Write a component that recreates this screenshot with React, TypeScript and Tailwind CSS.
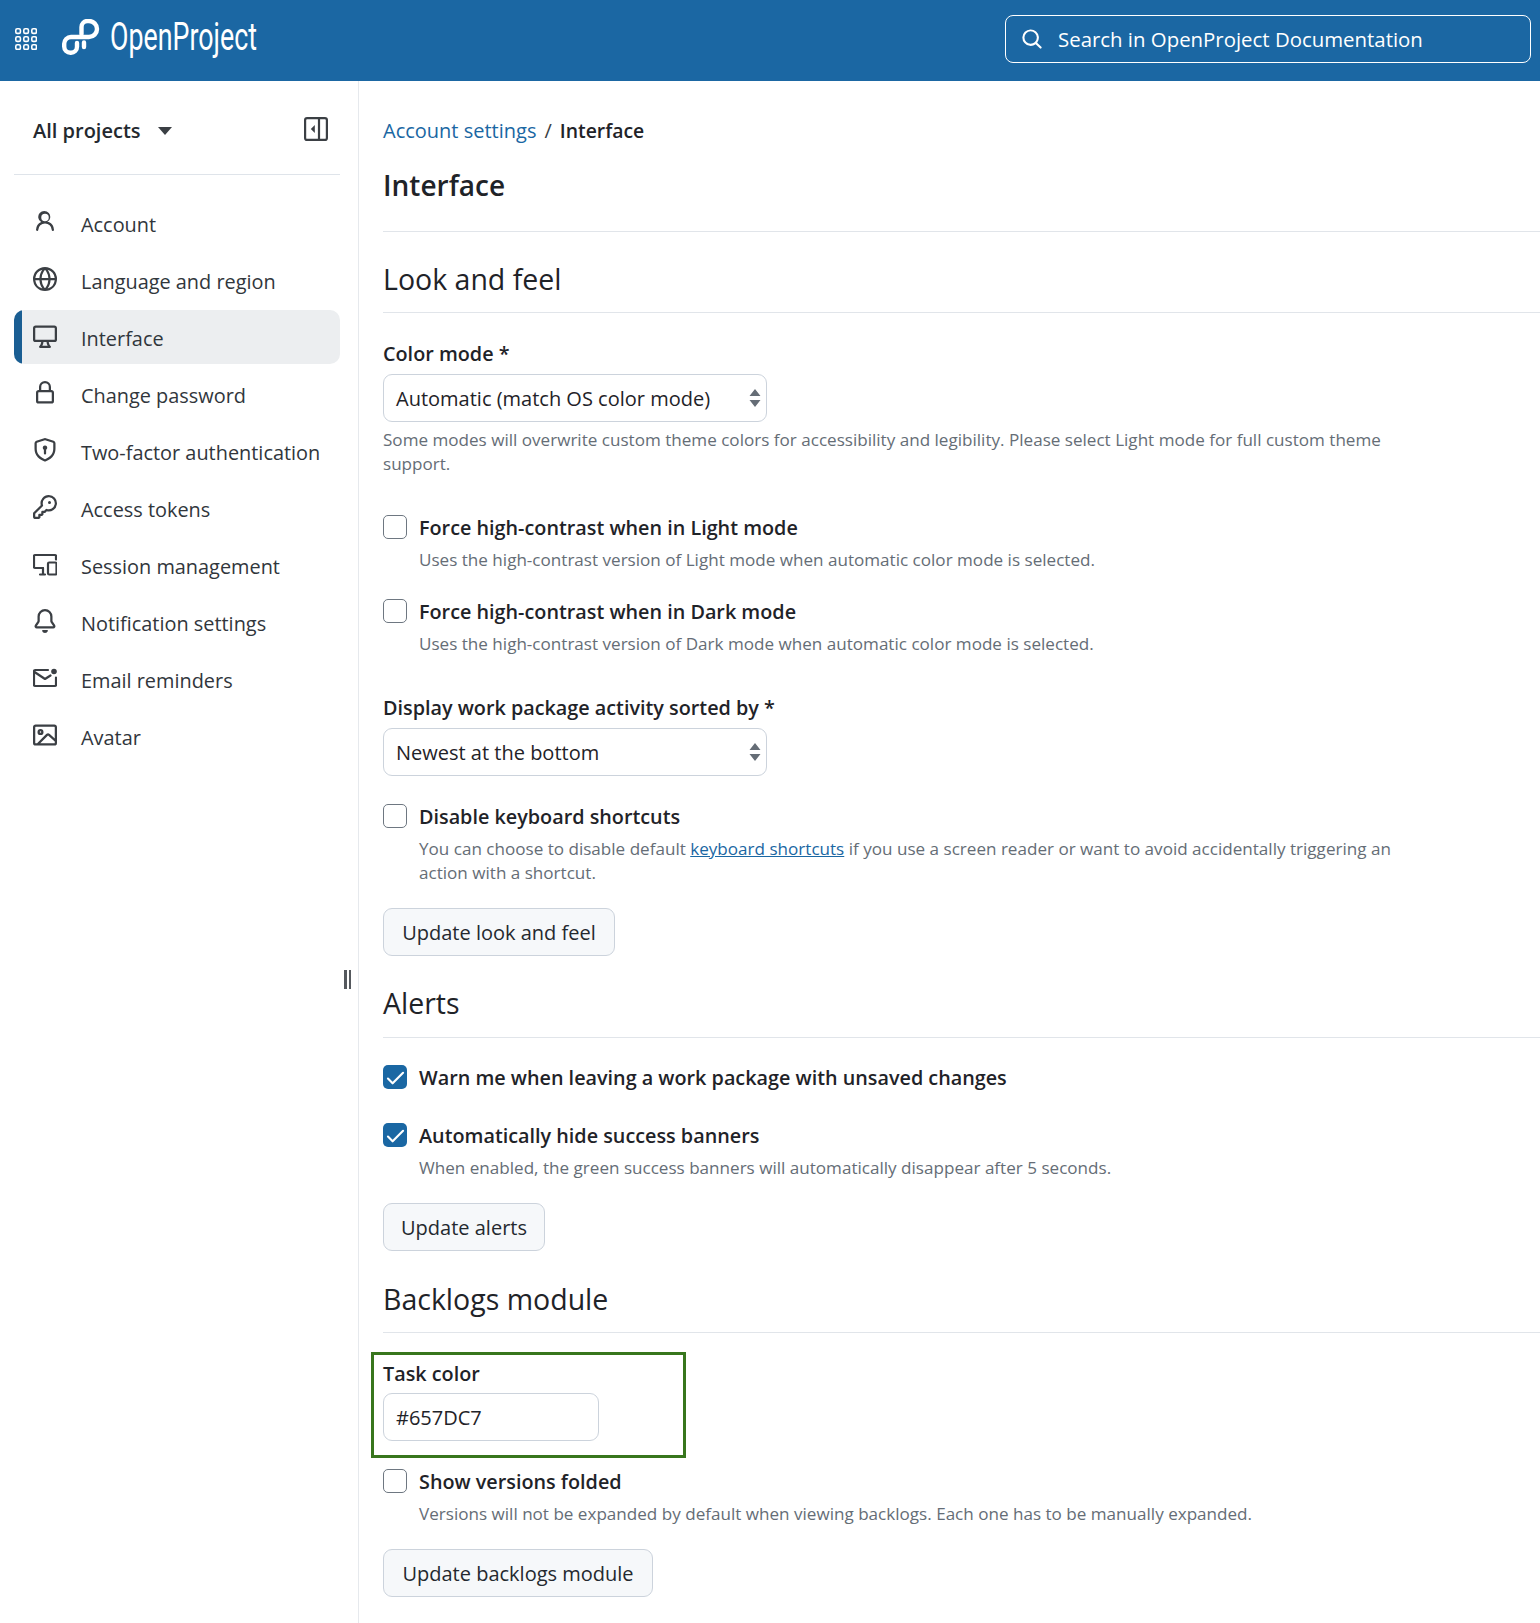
import type { ReactNode } from "react";

const fontStack = "font-['Open_Sans','Noto_Sans',sans-serif]";

// octicons, 16px grid
const paths = {
  person: "M10.561 8.073a6.005 6.005 0 0 1 3.432 5.142.75.75 0 1 1-1.498.07 4.5 4.5 0 0 0-8.99 0 .75.75 0 0 1-1.498-.07 6.004 6.004 0 0 1 3.431-5.142 3.999 3.999 0 1 1 4.123 0ZM10.5 5a2.5 2.5 0 1 0-5 0 2.5 2.5 0 0 0 5 0Z",
  globe: "M8 0a8 8 0 1 1 0 16A8 8 0 0 1 8 0ZM5.78 8.75a9.64 9.64 0 0 0 1.363 4.177c.255.426.542.832.857 1.215.245-.296.551-.705.857-1.215A9.64 9.64 0 0 0 10.22 8.75Zm4.44-1.5a9.64 9.64 0 0 0-1.363-4.177c-.307-.51-.612-.919-.857-1.215a9.927 9.927 0 0 0-.857 1.215A9.64 9.64 0 0 0 5.78 7.25Zm-5.944 1.5H1.543a6.507 6.507 0 0 0 4.666 5.5c-.123-.181-.24-.365-.352-.552-.715-1.192-1.437-2.874-1.581-4.948Zm-2.733-1.5h2.733c.144-2.074.866-3.756 1.58-4.948.12-.197.237-.381.353-.552a6.507 6.507 0 0 0-4.666 5.5Zm10.181 1.5c-.144 2.074-.866 3.756-1.58 4.948-.12.197-.237.381-.353.552a6.507 6.507 0 0 0 4.666-5.5Zm2.733-1.5a6.507 6.507 0 0 0-4.666-5.5c.123.181.24.365.353.552.714 1.192 1.436 2.874 1.58 4.948Z",
  desktop: "M14.25 1c.966 0 1.75.784 1.75 1.75v7.5A1.75 1.75 0 0 1 14.25 12h-3.727c.099 1.041.52 1.872 1.292 2.757A.752.752 0 0 1 11.25 16h-6.5a.75.75 0 0 1-.565-1.243c.772-.885 1.192-1.716 1.292-2.757H1.75A1.75 1.75 0 0 1 0 10.25v-7.5C0 1.784.784 1 1.75 1ZM1.75 2.5a.25.25 0 0 0-.25.25v7.5c0 .138.112.25.25.25h12.5a.25.25 0 0 0 .25-.25v-7.5a.25.25 0 0 0-.25-.25ZM9.018 12H6.982a5.72 5.72 0 0 1-.765 2.5h3.566a5.72 5.72 0 0 1-.765-2.5Z",
  lock: "M4 4a4 4 0 0 1 8 0v2h.25c.966 0 1.75.784 1.75 1.75v5.5A1.75 1.75 0 0 1 12.25 15h-8.5A1.75 1.75 0 0 1 2 13.25v-5.5C2 6.784 2.784 6 3.75 6H4Zm8.25 3.5h-8.5a.25.25 0 0 0-.25.25v5.5c0 .138.112.25.25.25h8.5a.25.25 0 0 0 .25-.25v-5.5a.25.25 0 0 0-.25-.25ZM10.5 6V4a2.5 2.5 0 1 0-5 0v2Z",
  shield: "m8.533.133 5.25 1.68A1.75 1.75 0 0 1 15 3.48V7c0 1.566-.32 3.182-1.303 4.682-.983 1.498-2.585 2.813-5.032 3.855a1.697 1.697 0 0 1-1.33 0c-2.447-1.042-4.049-2.357-5.032-3.855C1.32 10.182 1 8.566 1 7V3.48a1.75 1.75 0 0 1 1.217-1.667l5.25-1.68a1.748 1.748 0 0 1 1.066 0Zm-.61 1.429.001.001-5.25 1.68a.251.251 0 0 0-.174.237V7c0 1.36.275 2.666 1.057 3.859.784 1.194 2.121 2.342 4.366 3.298a.196.196 0 0 0 .154 0c2.245-.957 3.582-2.103 4.366-3.297C13.225 9.666 13.5 8.358 13.5 7V3.48a.25.25 0 0 0-.174-.238l-5.25-1.68a.25.25 0 0 0-.153 0ZM9.5 6.5c0 .536-.286 1.032-.75 1.3v2.45a.75.75 0 0 1-1.5 0V7.8A1.5 1.5 0 1 1 9.5 6.5Z",
  key: "M10.5 0a5.499 5.499 0 1 1-1.288 10.848l-.932.932a.749.749 0 0 1-.53.22H7v.75a.749.749 0 0 1-.22.53l-.5.5a.749.749 0 0 1-.53.22H5v.75a.749.749 0 0 1-.22.53l-.5.5a.749.749 0 0 1-.53.22h-2A1.75 1.75 0 0 1 0 14.25v-2c0-.199.079-.389.22-.53l4.932-4.932A5.5 5.5 0 0 1 10.5 0Zm-4 5.5c-.001.431.069.86.205 1.269a.75.75 0 0 1-.181.768L1.5 12.56v1.69c0 .138.112.25.25.25h1.69l.06-.06v-1.19a.75.75 0 0 1 .75-.75h1.19l.06-.06v-1.19a.75.75 0 0 1 .75-.75h1.19l1.023-1.025a.75.75 0 0 1 .768-.18A4 4 0 1 0 6.5 5.5ZM11 6a1 1 0 1 1 0-2 1 1 0 0 1 0 2Z",
  bell: "M8 16c.9 0 1.7-.6 1.9-1.5.1-.3-.1-.5-.4-.5h-3c-.3 0-.5.2-.4.5.2.9 1 1.5 1.9 1.5ZM3 5a5 5 0 0 1 10 0v2.947c0 .05.015.098.042.139l1.703 2.555A1.519 1.519 0 0 1 13.482 13H2.518a1.516 1.516 0 0 1-1.263-2.36l1.703-2.554A.255.255 0 0 0 3 7.947Zm5-3.5A3.5 3.5 0 0 0 4.5 5v2.947c0 .346-.102.683-.294.97l-1.703 2.556a.017.017 0 0 0-.003.01l.001.006c0 .002.002.004.004.006l.006.004.007.001h10.964l.007-.001.006-.004.004-.006.001-.007a.017.017 0 0 0-.003-.01l-1.703-2.554a1.745 1.745 0 0 1-.294-.97V5A3.5 3.5 0 0 0 8 1.5Z",
  image: "M16 13.25A1.75 1.75 0 0 1 14.25 15H1.75A1.75 1.75 0 0 1 0 13.25V2.75C0 1.784.784 1 1.75 1h12.5c.966 0 1.75.784 1.75 1.75ZM1.75 2.5a.25.25 0 0 0-.25.25v10.5c0 .138.112.25.25.25h.94l.03-.03 6.077-6.078a1.75 1.75 0 0 1 2.412-.06L14.5 10.31V2.75a.25.25 0 0 0-.25-.25Zm12.5 11a.25.25 0 0 0 .25-.25v-.917l-4.298-3.889a.25.25 0 0 0-.344.009L4.81 13.5ZM7 6a2 2 0 1 1-3.999.001A2 2 0 0 1 7 6ZM5.5 6a.5.5 0 1 0-1 0 .5.5 0 0 0 1 0Z",
  search: "M10.68 11.74a6 6 0 0 1-7.922-8.982 6 6 0 0 1 8.982 7.922l3.04 3.04a.749.749 0 0 1-.326 1.275.749.749 0 0 1-.734-.215ZM11.5 7a4.499 4.499 0 1 0-8.997 0A4.499 4.499 0 0 0 11.5 7Z",
  check: "M13.78 4.22a.75.75 0 0 1 0 1.06l-7.25 7.25a.75.75 0 0 1-1.06 0L2.22 9.28a.751.751 0 0 1 .018-1.042.751.751 0 0 1 1.042-.018L6 10.94l6.72-6.72a.75.75 0 0 1 1.06 0Z",
};

function Octicon({ name, size = 24 }: { name: keyof typeof paths; size?: number }) {
  return (
    <svg width={size} height={size} viewBox="0 0 16 16" fill="currentColor">
      <path d={paths[name]} />
    </svg>
  );
}

function GridIcon() {
  const cells = [0, 8, 16];
  return (
    <svg width="22" height="22" viewBox="0 0 22 22" fill="none" stroke="white" strokeWidth="1.6">
      {cells.map((y) =>
        cells.map((x) => <rect key={`${x}-${y}`} x={x + 0.8} y={y + 0.8} width="4.6" height="4.6" rx="1.4" />)
      )}
    </svg>
  );
}

function Logo() {
  return (
    <svg width="270" height="40" viewBox="0 0 270 40" fill="none">
      <path
        d="M19.5 15V8A6 6 0 0 1 25.5 2H27A7.8 7.8 0 0 1 27 18H9A6.8 6.8 0 0 0 2.2 24.8V27.5A6.3 6.3 0 0 0 8.5 33.8H9A6 6 0 0 0 15 27.8V24M22 23.5V28"
        stroke="white"
        strokeWidth="4.4"
        strokeLinecap="round"
      />
      <text
        x="48"
        y="31"
        fill="white"
        fontFamily="Roboto, sans-serif"
        fontWeight="400"
        fontSize="38"
        textLength="147"
        lengthAdjust="spacingAndGlyphs"
      >
        OpenProject
      </text>
    </svg>
  );
}

function SessionIcon() {
  return (
    <svg width="24" height="24" viewBox="0 0 24 24" fill="none" stroke="currentColor" strokeWidth="2.2" strokeLinecap="round" strokeLinejoin="round">
      <path d="M23 7.5V4.2A1.2 1.2 0 0 0 21.8 3H2.2A1.2 1.2 0 0 0 1 4.2V14.8A1.2 1.2 0 0 0 2.2 16H10" />
      <path d="M7 22.5h5M10 16v6" />
      <rect x="15" y="10.5" width="8.5" height="12" rx="1.2" />
    </svg>
  );
}

function MailDotIcon() {
  return (
    <svg width="24" height="24" viewBox="0 0 24 24" fill="none" stroke="currentColor" strokeWidth="2.2" strokeLinecap="round" strokeLinejoin="round">
      <path d="M15 4H2.2A1.2 1.2 0 0 0 1 5.2V18.8A1.2 1.2 0 0 0 2.2 20H21.8A1.2 1.2 0 0 0 23 18.8V11.5" />
      <path d="M1.5 6L12 13l5.5-3.5" />
      <circle cx="21" cy="5.5" r="2.8" fill="currentColor" stroke="none" />
    </svg>
  );
}

function SidebarToggle() {
  return (
    <svg className="mb-[3px]" width="24" height="24" viewBox="0 0 24 24" fill="none" stroke="#3b3f44" strokeWidth="2.2">
      <rect x="1.1" y="1.1" width="21.8" height="21.8" rx="2" />
      <path d="M15 1v22" />
      <path d="M10.8 8v8l-4-4z" fill="#3b3f44" stroke="none" />
    </svg>
  );
}

const navItems: { label: string; icon: ReactNode; active?: boolean }[] = [
  { label: "Account", icon: <Octicon name="person" /> },
  { label: "Language and region", icon: <Octicon name="globe" /> },
  { label: "Interface", icon: <Octicon name="desktop" />, active: true },
  { label: "Change password", icon: <Octicon name="lock" /> },
  { label: "Two-factor authentication", icon: <Octicon name="shield" /> },
  { label: "Access tokens", icon: <Octicon name="key" /> },
  { label: "Session management", icon: <SessionIcon /> },
  { label: "Notification settings", icon: <Octicon name="bell" /> },
  { label: "Email reminders", icon: <MailDotIcon /> },
  { label: "Avatar", icon: <Octicon name="image" /> },
];

function Sidebar() {
  return (
    <aside className="w-[359px] shrink-0 border-r border-[#e6e9ed] relative">
      <div className="h-[94px] ml-[14px] mr-[18px] border-b border-[#dfe4ea] flex items-center justify-between pl-[19px] pr-[12px] pt-[6px]">
        <div className="flex items-center">
          <span className="text-[20px] font-semibold text-[#24292f]">All projects</span>
          <span className="ml-[17px] w-0 h-0 border-x-[7.5px] border-x-transparent border-t-[8px] border-t-[#3b3f44]" />
        </div>
        <SidebarToggle />
      </div>
      <nav className="mt-[21px] flex flex-col gap-[3px]">
        {navItems.map((item) => (
          <div
            key={item.label}
            className={`h-[54px] ml-[14px] mr-[18px] pl-[19px] flex items-center gap-[24px] rounded-[10px] overflow-hidden relative text-[#31363c] ${
              item.active ? "bg-[#eceef0]" : ""
            }`}
          >
            {item.active && <span className="absolute left-0 top-0 bottom-0 w-[8px] bg-[#1a5e93]" />}
            <span className="w-[24px] h-[24px] flex items-center justify-center text-[#3b3f44] -mt-[2px]">{item.icon}</span>
            <span className="text-[19.9px] pt-[3px]">{item.label}</span>
          </div>
        ))}
      </nav>
      <div className="absolute left-[344px] top-[889px] flex gap-[2px]">
        <span className="w-[2.5px] h-[19px] bg-[#55595e]" />
        <span className="w-[2.5px] h-[19px] bg-[#55595e]" />
      </div>
    </aside>
  );
}

function SectionTitle({ children, className }: { children: string; className?: string }) {
  return (
    <h2 className={`text-[28.5px] leading-[40px] text-[#1f2328] border-b border-[#e1e5ea] ${className}`}>
      {children}
    </h2>
  );
}

function Label({ children }: { children: string }) {
  return <label className="block text-[19.8px] leading-[28px] font-semibold text-[#1f2328]">{children}</label>;
}

function Select({ value }: { value: string }) {
  return (
    <div className="mt-[6px] w-[384px] h-[48px] border border-[#ccd3dc] rounded-[9px] pl-[12px] pr-[5px] flex items-center justify-between text-[20px] text-[#1f2328]">
      <span className="pt-[1px]">{value}</span>
      <svg width="12" height="20" viewBox="0 0 12 20" fill="#656d76">
        <path d="M6 1l5.5 7H.5zM6 19L.5 12h11z" />
      </svg>
    </div>
  );
}

function Help({ children }: { children: ReactNode }) {
  return <p className="text-[17.08px] leading-[24px] text-[#656d76] max-w-[1010px]">{children}</p>;
}

function Check({ label, checked, help, className }: { label: string; checked?: boolean; help?: ReactNode; className?: string }) {
  return (
    <div className={`flex gap-[12px] ${className}`}>
      {checked ? (
        <span className="mt-[2px] w-[24px] h-[24px] rounded-[5px] bg-[#1a67a3] flex items-center justify-center text-white shrink-0">
          <Octicon name="check" size={23} />
        </span>
      ) : (
        <span className="mt-[2px] w-[24px] h-[24px] rounded-[5px] border border-[#6e7781] bg-white shrink-0" />
      )}
      <div className="pt-[1px]">
        <div className="text-[19.8px] leading-[28px] font-semibold text-[#1f2328]">{label}</div>
        {help && <div className="mt-[6px]"><Help>{help}</Help></div>}
      </div>
    </div>
  );
}

function Btn({ children, className }: { children: string; className?: string }) {
  return (
    <button
      type="button"
      className={`block h-[48px] pt-[2px] border border-[#ccd3dc] rounded-[9px] bg-[#f6f8fa] text-[20px] text-[#24292f] ${className}`}
    >
      {children}
    </button>
  );
}

export default function App() {
  return (
    <div className={`w-[1540px] h-[1623px] bg-white flex flex-col overflow-hidden ${fontStack}`}>
      <header className="h-[81px] shrink-0 bg-[#1b67a3] flex items-center justify-between pl-[15px] pr-[9px]">
        <div className="flex items-center gap-[25px] -mt-[3px]">
          <GridIcon />
          <Logo />
        </div>
        <div className="w-[526px] h-[48px] mb-[3px] border border-white rounded-[8px] flex items-center gap-[15px] pl-[15px] text-white">
          <Octicon name="search" size={22} />
          <span className="text-[20.4px] pt-[1px]">Search in OpenProject Documentation</span>
        </div>
      </header>
      <div className="flex flex-1">
        <Sidebar />
        <main className="flex-1 pl-[24px] pt-[35px]">
          <div className="flex items-center h-[30px] text-[20px]">
            <a className="text-[#1a67a3]">Account settings</a>
            <span className="mx-[8px] text-[#3b3f44]">/</span>
            <span className="font-semibold text-[19.4px] text-[#1f2328]">Interface</span>
          </div>
          <h1 className="mt-[19px] text-[28px] leading-[40px] font-semibold text-[#1f2328] border-b border-[#e1e5ea] pb-[26px]">Interface</h1>

          <SectionTitle className="mt-[27px] pb-[13px]">Look and feel</SectionTitle>
          <div className="mt-[27px]"><Label>Color mode *</Label></div>
          <Select value="Automatic (match OS color mode)" />
          <div className="mt-[6px]">
            <Help>Some modes will overwrite custom theme colors for accessibility and legibility. Please select Light mode for full custom theme support.</Help>
          </div>
          <Check className="mt-[37px]" label="Force high-contrast when in Light mode" help="Uses the high-contrast version of Light mode when automatic color mode is selected." />
          <Check className="mt-[25px]" label="Force high-contrast when in Dark mode" help="Uses the high-contrast version of Dark mode when automatic color mode is selected." />
          <div className="mt-[38px]"><Label>Display work package activity sorted by *</Label></div>
          <Select value="Newest at the bottom" />
          <Check
            className="mt-[26px]"
            label="Disable keyboard shortcuts"
            help={
              <>
                You can choose to disable default <a className="text-[#1a67a3] underline">keyboard shortcuts</a> if you use a screen reader or want to avoid accidentally triggering an action with a shortcut.
              </>
            }
          />
          <Btn className="mt-[23px] w-[232px]">Update look and feel</Btn>

          <SectionTitle className="mt-[27px] pb-[14px]">Alerts</SectionTitle>
          <Check className="mt-[25px]" checked label="Warn me when leaving a work package with unsaved changes" />
          <Check className="mt-[29px]" checked label="Automatically hide success banners" help="When enabled, the green success banners will automatically disappear after 5 seconds." />
          <Btn className="mt-[23px] w-[162px]">Update alerts</Btn>

          <SectionTitle className="mt-[28px] pb-[13px]">Backlogs module</SectionTitle>
          <div className="mt-[19px] -ml-[12px] w-[315px] h-[106px] border-[3px] border-[#38761d] pl-[9px] pt-[5px]">
            <Label>Task color</Label>
            <div className="mt-[5px] w-[216px] h-[48px] pt-[1px] border border-[#ccd3dc] rounded-[9px] pl-[12px] flex items-center text-[20px] text-[#1f2328]">#657DC7</div>
          </div>
          <Check className="mt-[9px]" label="Show versions folded" help="Versions will not be expanded by default when viewing backlogs. Each one has to be manually expanded." />
          <Btn className="mt-[23px] w-[270px]">Update backlogs module</Btn>
        </main>
      </div>
    </div>
  );
}
